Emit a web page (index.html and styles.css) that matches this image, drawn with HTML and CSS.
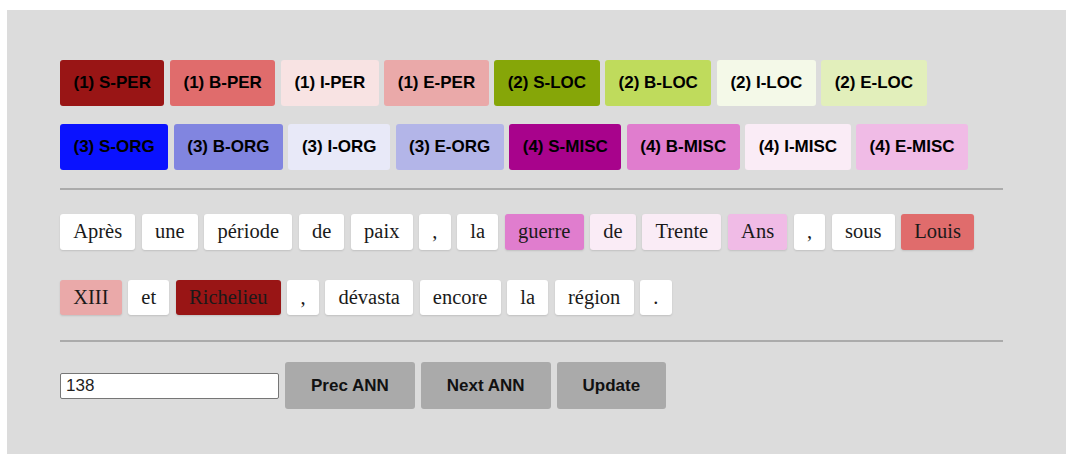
FILE: index.html
```html
<!DOCTYPE html>
<html lang="fr">
<head>
<meta charset="utf-8">
<title>Annotation</title>
<link rel="stylesheet" href="styles.css">
</head>
<body>
<div class="panel">
  <div class="labels">
    <div class="label-row">
      <span class="lab s-per">(1) S-PER</span>
      <span class="lab b-per">(1) B-PER</span>
      <span class="lab i-per">(1) I-PER</span>
      <span class="lab e-per">(1) E-PER</span>
      <span class="lab s-loc">(2) S-LOC</span>
      <span class="lab b-loc">(2) B-LOC</span>
      <span class="lab i-loc">(2) I-LOC</span>
      <span class="lab e-loc">(2) E-LOC</span>
    </div>
    <div class="label-row">
      <span class="lab s-org">(3) S-ORG</span>
      <span class="lab b-org">(3) B-ORG</span>
      <span class="lab i-org">(3) I-ORG</span>
      <span class="lab e-org">(3) E-ORG</span>
      <span class="lab s-misc">(4) S-MISC</span>
      <span class="lab b-misc">(4) B-MISC</span>
      <span class="lab i-misc">(4) I-MISC</span>
      <span class="lab e-misc">(4) E-MISC</span>
    </div>
  </div>
  <hr class="sep sep-top">
  <div class="tokens">
    <span class="tok">Après</span>
    <span class="tok">une</span>
    <span class="tok">période</span>
    <span class="tok">de</span>
    <span class="tok">paix</span>
    <span class="tok">,</span>
    <span class="tok">la</span>
    <span class="tok b-misc">guerre</span>
    <span class="tok i-misc">de</span>
    <span class="tok i-misc">Trente</span>
    <span class="tok e-misc">Ans</span>
    <span class="tok">,</span>
    <span class="tok">sous</span>
    <span class="tok b-per">Louis</span>
    <span class="tok e-per">XIII</span>
    <span class="tok">et</span>
    <span class="tok s-per">Richelieu</span>
    <span class="tok">,</span>
    <span class="tok">dévasta</span>
    <span class="tok">encore</span>
    <span class="tok">la</span>
    <span class="tok">région</span>
    <span class="tok">.</span>
  </div>
  <hr class="sep sep-bottom">
  <div class="controls">
    <input class="num" type="text" value="138">
    <button class="act">Prec ANN</button>
    <button class="act">Next ANN</button>
    <button class="act">Update</button>
  </div>
</div>
</body>
</html>
```
FILE: styles.css
```css
html, body {
  margin: 0;
  padding: 0;
  background: #ffffff;
}

.panel {
  margin: 10px 5px 0 7px;
  padding: 50px 63px 45px 53px;
  background: #dcdcdc;
}

.labels {
  display: flex;
  flex-direction: column;
  gap: 18px;
}

.label-row {
  display: flex;
  gap: 5.5px;
}

.lab {
  display: block;
  padding: 14px 13.5px;
  line-height: 18px;
  font-family: "Liberation Sans", Arial, sans-serif;
  font-weight: bold;
  font-size: 17px;
  color: #000;
  border-radius: 3px;
  white-space: nowrap;
}

.tok {
  display: block;
  background: #ffffff;
  padding: 6px 13.2px;
  line-height: 23.5px;
  font-family: "Liberation Serif", "Times New Roman", serif;
  font-size: 20.5px;
  color: #1a1a1a;
  border-radius: 3px;
  box-shadow: 0 1px 2px rgba(0, 0, 0, 0.13);
  white-space: nowrap;
}

.s-per { background: #991515; }
.b-per { background: #e06c6c; }
.i-per { background: #f8e3e3; }
.e-per { background: #eaa9a9; }
.s-loc { background: #86a608; }
.b-loc { background: #bfdb5c; }
.i-loc { background: #f4f9e8; }
.e-loc { background: #e2efbb; }
.s-org { background: #0a12ff; }
.b-org { background: #8185e0; }
.i-org { background: #e8e9f8; }
.e-org { background: #b3b5e8; }
.s-misc { background: #a8038c; }
.b-misc { background: #e07dce; }
.i-misc { background: #faecf6; }
.e-misc { background: #f0bbe6; }

.sep {
  margin: 18px 0 0 0;
  height: 0;
  border: 0;
  border-top: 2px solid #ababab;
}

.sep-bottom {
  margin-top: 25px;
}

.tokens {
  margin-top: 24px;
  display: flex;
  flex-wrap: wrap;
  column-gap: 6.5px;
  row-gap: 30px;
}

.controls {
  margin-top: 20px;
  display: flex;
  align-items: center;
  gap: 6px;
}

.num {
  box-sizing: border-box;
  width: 219px;
  height: 26px;
  margin: 0;
  padding: 1px 5px;
  border: 1px solid #767676;
  border-radius: 2px;
  background: #fff;
  font-family: "Liberation Sans", Arial, sans-serif;
  font-size: 17px;
  color: #222;
}

.act {
  height: 47px;
  margin: 0;
  padding: 0 26px;
  border: 0;
  border-radius: 3px;
  background: #aaaaaa;
  font-family: "Liberation Sans", Arial, sans-serif;
  font-weight: bold;
  font-size: 17px;
  color: #111;
}
```
